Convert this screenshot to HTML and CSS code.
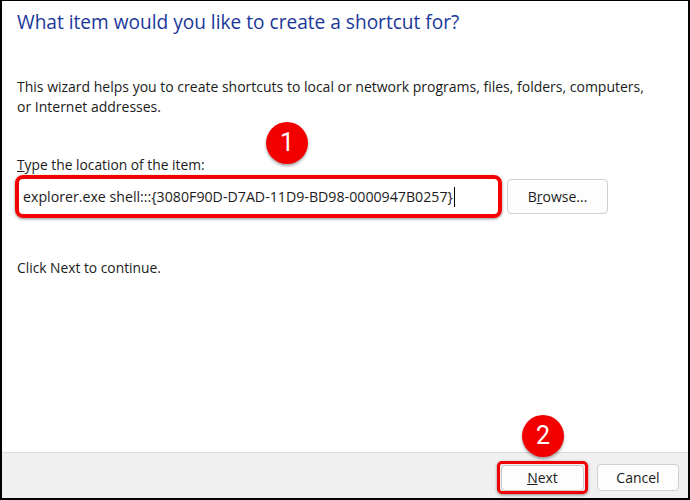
FILE: index.html
```html
<!DOCTYPE html>
<html lang="en">
<head>
<meta charset="utf-8">
<title>Create Shortcut</title>
<link rel="stylesheet" href="styles.css">
</head>
<body>
<div class="window">
  <main class="content">
    <h1 class="title">What item would you like to create a shortcut for?</h1>
    <p class="intro">This wizard helps you to create shortcuts to local or network programs, files, folders, computers,<br>or Internet addresses.</p>
    <div class="field">
      <label class="label"><u>T</u>ype the location of the item:</label>
      <div class="row">
        <div class="input-hl">
          <div class="input">explorer.exe shell:::{3080F90D-D7AD-11D9-BD98-0000947B0257}<span class="caret"></span></div>
        </div>
        <button class="btn browse">B<u>r</u>owse...</button>
      </div>
    </div>
    <p class="continue">Click Next to continue.</p>
  </main>
  <footer class="footer">
    <div class="next-hl"><button class="btn next"><u>N</u>ext</button></div>
    <button class="btn cancel">Cancel</button>
  </footer>
  <span class="badge badge-1">1</span>
  <span class="badge badge-2">2</span>
</div>
</body>
</html>
```
FILE: styles.css
```css
* { box-sizing: border-box; }
html, body { margin: 0; padding: 0; background: #fff; }
body { font-family: "Open Sans", "Noto Sans", sans-serif; color: #1b1b1b; }
.window {
  position: relative;
  width: 690px;
  height: 500px;
  border-left: 2px solid #000;
  border-top: 1px solid #000;
  border-right: 2px solid #000;
  border-bottom: 2px solid #000;
  display: flex;
  flex-direction: column;
  background: #fff;
}
.content {
  flex: 1;
  padding: 7px 15px 0 15px;
  display: flex;
  flex-direction: column;
}
.title {
  margin: 0;
  font-size: 19.1px;
  line-height: 28px;
  font-weight: 400;
  color: #1a3799;
}
.intro {
  margin: 41px 0 0 0;
  font-size: 14px;
  line-height: 20px;
}
.field { margin-top: 38px; display: flex; flex-direction: column; }
.label { font-size: 13.8px; line-height: 20px; }
.row { display: flex; align-items: center; height: 43px; }
.input-hl {
  margin-left: -2px;
  width: 487px;
  height: 43px;
  border: 4px solid #f50000;
  border-radius: 8px;
  box-shadow: 0 1px 3px rgba(0,0,0,0.45);
  display: flex;
  align-items: center;
  padding-left: 4px;
}
.input { font-size: 14.2px; line-height: 20px; display: flex; align-items: center; white-space: nowrap; }
.caret { display: inline-block; width: 1px; height: 20px; background: #000; margin-left: 1px; }
.btn {
  font-family: inherit;
  font-size: 14px;
  color: #1b1b1b;
  background: #fdfdfd;
  border: 1px solid #d0d0d0;
  border-radius: 4px;
  padding: 0;
}
.browse { margin-left: 5px; width: 101px; height: 35px; }
.continue { margin: 40px 0 0 0; font-size: 13.8px; line-height: 20px; }
.footer {
  height: 46px;
  border-top: 1px solid #dcdcdc;
  background: #f0f0f0;
  display: flex;
  justify-content: flex-end;
  align-items: center;
  padding: 4px 9px 0 0;
  gap: 9px;
}
.next-hl {
  width: 91px;
  height: 33px;
  border: 3px solid #f50000;
  border-radius: 5px;
  box-shadow: 0 1px 3px rgba(0,0,0,0.45);
  display: flex;
  align-items: center;
  justify-content: center;
}
.next { width: 83px; height: 26px; border-color: #c8c8c8; }
.cancel { width: 82px; height: 27px; }
.badge {
  position: absolute;
  width: 42px;
  height: 42px;
  border-radius: 50%;
  background: #f20000;
  color: #fff;
  font-family: "Roboto", "Liberation Sans", sans-serif;
  font-size: 25px;
  line-height: 42px;
  text-align: center;
  box-shadow: 0 2px 3px rgba(0,0,0,0.35);
}
.badge-1 { left: 264px; top: 121px; }
.badge-2 { left: 520px; top: 414px; }
```
